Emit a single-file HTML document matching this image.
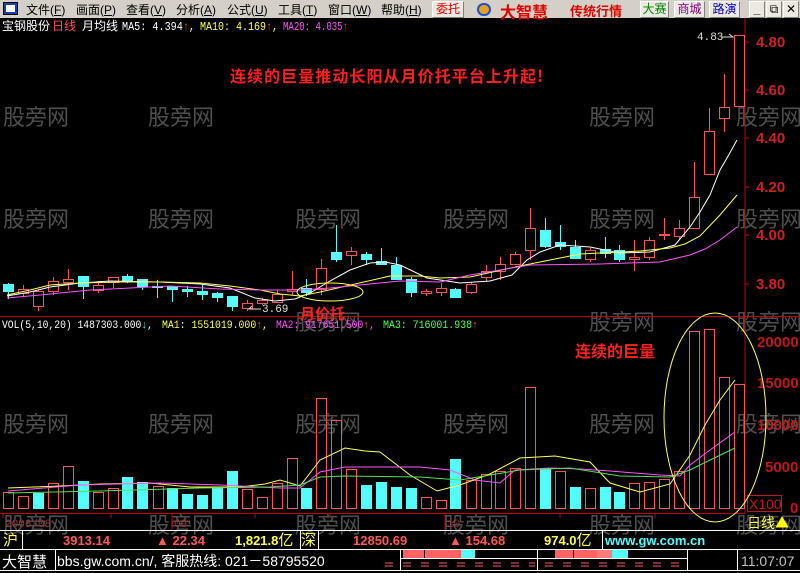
<!DOCTYPE html>
<html><head><meta charset="utf-8">
<style>
*{margin:0;padding:0;box-sizing:border-box}
body{width:800px;height:573px;background:#000;overflow:hidden;position:relative;font-family:"Liberation Sans","Noto Sans CJK SC",sans-serif}
.menu{position:absolute;left:0;top:0;width:800px;height:18px;background:#d4d0c8;font-size:12px;color:#000}
.menu span{position:absolute;top:1px;white-space:nowrap}
.btn{position:absolute;top:1px;height:17px;border:1px solid #fff;border-right-color:#808080;border-bottom-color:#808080;background:#ece9e0;font-size:12px;padding:0;line-height:15px;white-space:nowrap;text-align:center;overflow:hidden}
svg{position:absolute;left:0;top:0}
</style></head><body>
<div class="menu">
<div style="position:absolute;left:3px;top:2px;width:15px;height:13px;background:#1a3fa8;border:1px solid #000"><div style="position:absolute;left:2px;top:2px;width:9px;height:7px;background:#fff"></div></div>
<span style="left:26px">文件(<u>F</u>)</span>
<span style="left:76px">画面(<u>P</u>)</span>
<span style="left:126px">查看(<u>V</u>)</span>
<span style="left:176px">分析(<u>A</u>)</span>
<span style="left:227px">公式(<u>U</u>)</span>
<span style="left:278px">工具(<u>T</u>)</span>
<span style="left:328px">窗口(<u>W</u>)</span>
<span style="left:381px">帮助(<u>H</u>)</span>
<div class="btn" style="left:432px;width:32px;color:#e00000">委托</div>
<div style="position:absolute;left:477px;top:3px;width:14px;height:13px;border-radius:7px;background:#e8a020;border:2px solid #2050d0"></div>
<span style="left:500px;top:-1px;color:#e00000;font-weight:bold;font-size:16px;font-family:'Noto Sans CJK SC',sans-serif">大智慧</span>
<span style="left:570px;top:1px;color:#e00000;font-weight:bold;font-size:13px;font-family:'Noto Sans CJK SC',sans-serif">传统行情</span>
<div class="btn" style="left:640px;width:29px;color:#008000">大赛</div>
<div class="btn" style="left:674px;width:31px;color:#800080">商城</div>
<div class="btn" style="left:709px;width:31px;color:#0000c0">路演</div>
<div class="btn" style="left:749px;width:16px;font-weight:bold">_</div>
<div class="btn" style="left:766px;width:16px">⧉</div>
<div class="btn" style="left:783px;width:16px">✕</div>
</div>

<svg width="800" height="573" viewBox="0 0 800 573" font-family="Liberation Mono, Noto Sans CJK SC, monospace">
<g fill="#4e4e4e" font-size="22" font-family="Noto Sans CJK SC, sans-serif">
<text x="3" y="125">股旁网</text><text x="148" y="125">股旁网</text><text x="589" y="125">股旁网</text><text x="736" y="125">股旁网</text>
<text x="3" y="227">股旁网</text><text x="148" y="227">股旁网</text><text x="295" y="227">股旁网</text><text x="443" y="227">股旁网</text><text x="589" y="227">股旁网</text><text x="736" y="227">股旁网</text>
<text x="295" y="330">股旁网</text><text x="589" y="330">股旁网</text><text x="736" y="330">股旁网</text>
<text x="3" y="432">股旁网</text><text x="148" y="432">股旁网</text><text x="295" y="432">股旁网</text><text x="443" y="432">股旁网</text><text x="589" y="432">股旁网</text><text x="736" y="432">股旁网</text>
<text x="3" y="533">股旁网</text><text x="148" y="533">股旁网</text><text x="295" y="533">股旁网</text><text x="443" y="533">股旁网</text><text x="589" y="533">股旁网</text><text x="736" y="533">股旁网</text>
</g>
<g font-size="12">
<text x="2" y="30" fill="#fff" font-family="Noto Sans CJK SC, sans-serif">宝钢股份</text>
<text x="52" y="30" fill="#ff5050" font-family="Noto Sans CJK SC, sans-serif">日线</text>
<text x="82" y="30" fill="#fff" font-family="Noto Sans CJK SC, sans-serif">月均线</text>
<text x="122" y="30" fill="#fff" textLength="73" lengthAdjust="spacingAndGlyphs">MA5: 4.394<tspan fill="#ff5050">↑</tspan>,</text>
<text x="200" y="30" fill="#ffff54" textLength="78" lengthAdjust="spacingAndGlyphs">MA10: 4.169<tspan fill="#ff5050">↑</tspan>,</text>
<text x="283" y="30" fill="#ff54ff" textLength="65" lengthAdjust="spacingAndGlyphs">MA20: 4.035<tspan fill="#ff5050">↑</tspan></text>
</g>
<line x1="745" y1="18" x2="745" y2="513" stroke="#c00000"/>
<line x1="0" y1="316.5" x2="800" y2="316.5" stroke="#c00000"/>
<line x1="0" y1="513.5" x2="745" y2="513.5" stroke="#c00000"/>
<g fill="#d02020" font-weight="bold" font-size="15" font-family="Liberation Sans, sans-serif">
<text x="756" y="47">4.80</text><text x="756" y="95">4.60</text><text x="756" y="143">4.40</text><text x="756" y="192">4.20</text><text x="756" y="240">4.00</text><text x="756" y="289">3.80</text>
</g>
<g fill="#c01818" font-weight="bold" font-size="15" font-family="Liberation Sans, sans-serif">
<text x="757" y="347">20000</text><text x="757" y="388">15000</text><text x="757" y="430">10000</text><text x="765" y="472">5000</text><text x="790" y="513">0</text>
</g>
<rect x="747.5" y="495.5" width="34" height="16" fill="none" stroke="#c01818"/>
<text x="749" y="509" fill="#c01818" font-size="14" font-family="Liberation Sans, sans-serif">X100</text>
<g stroke="#c00000"><line x1="745" y1="42" x2="749" y2="42"/><line x1="745" y1="90" x2="749" y2="90"/><line x1="745" y1="138" x2="749" y2="138"/><line x1="745" y1="187" x2="749" y2="187"/><line x1="745" y1="235" x2="749" y2="235"/><line x1="745" y1="284" x2="749" y2="284"/>
<line x1="3" y1="513" x2="3" y2="518"/><line x1="111" y1="513" x2="111" y2="518"/><line x1="172" y1="513" x2="172" y2="530"/><line x1="445" y1="513" x2="445" y2="530"/><line x1="255" y1="513" x2="255" y2="518"/><line x1="330" y1="513" x2="330" y2="518"/><line x1="560" y1="513" x2="560" y2="518"/><line x1="655" y1="513" x2="655" y2="518"/></g>
<g fill="#a03030" font-size="11"><text x="5" y="527">2006/08</text><text x="174" y="527">09</text><text x="447" y="527">10</text></g>
<text x="747" y="528" fill="#ffff54" font-size="14" font-family="Noto Sans CJK SC, sans-serif">日线<tspan fill="#ffff00">▲</tspan></text>

<g stroke="#ff5454" stroke-width="1" fill="#000">
<path d="M23.5 285V296M38.5 290V311M53.5 277V295M68.5 269V290M98.5 281V293M113.5 277V288M247.5 300V311M262.5 298V305M277.5 290V303M292.5 271V295M321.5 259V295M351.5 247V265M426.5 289V296M441.5 283V296M471.5 282V294M486.5 265V281M500.5 257V280M515.5 252V265M530.5 208V260M590.5 248V262M634.5 240V271M649.5 237V260M664.5 218V240M679.5 220V240M694.5 162V228M709.5 108V174M724.5 74V132"/>
<rect x="18.5" y="289.5" width="10" height="4"/><rect x="33.5" y="291.5" width="10" height="15"/><rect x="48.5" y="281.5" width="10" height="10"/><rect x="63.5" y="279.5" width="10" height="3"/><rect x="93.5" y="285.5" width="10" height="5"/><rect x="108.5" y="277.5" width="10" height="5"/>
<rect x="242.5" y="303.5" width="10" height="5"/><rect x="257.5" y="300.5" width="10" height="3"/><rect x="272.5" y="294.5" width="10" height="8"/><rect x="287.5" y="289.5" width="10" height="2"/><rect x="316.5" y="268.5" width="10" height="21"/><rect x="346.5" y="251.5" width="10" height="4"/>
<rect x="421.5" y="291.5" width="10" height="2"/><rect x="436.5" y="288.5" width="10" height="4"/><rect x="466.5" y="284.5" width="10" height="8"/><rect x="481.5" y="271.5" width="10" height="6"/><rect x="495.5" y="264.5" width="10" height="7"/><rect x="510.5" y="254.5" width="10" height="10"/><rect x="525.5" y="228.5" width="10" height="22"/>
<rect x="585.5" y="250.5" width="10" height="9"/><rect x="629.5" y="257.5" width="10" height="2"/><rect x="644.5" y="240.5" width="10" height="17"/><rect x="659.5" y="234.5" width="10" height="1"/><rect x="674.5" y="228.5" width="10" height="8"/><rect x="689.5" y="197.5" width="10" height="31"/><rect x="704.5" y="131.5" width="10" height="43"/><rect x="719.5" y="107.5" width="10" height="11"/><rect x="734.5" y="35.5" width="10" height="71"/>
</g>
<g stroke="#54fcfc" fill="#54fcfc">
<path d="M8.5 283V299M83.5 276V299M127.5 274V283M142.5 279V290M157.5 280V298M172.5 286V302M187.5 286V297M202.5 285V300M217.5 292V302M232.5 296V311M306.5 279V296M336.5 225V262M366.5 252V265M381.5 248V265M396.5 257V280M411.5 277V297M455.5 288V298M545.5 218V248M560.5 225V250M575.5 240V258M605.5 237V258M619.5 245V262"/>
<rect x="3.5" y="284.5" width="10" height="7"/><rect x="78.5" y="276.5" width="10" height="10"/><rect x="122.5" y="276.5" width="10" height="4"/><rect x="137.5" y="279.5" width="10" height="7"/><rect x="152.5" y="286.5" width="10" height="1"/><rect x="167.5" y="286.5" width="10" height="3"/><rect x="182.5" y="289.5" width="10" height="2"/><rect x="197.5" y="291.5" width="10" height="3"/><rect x="212.5" y="293.5" width="10" height="4"/><rect x="227.5" y="296.5" width="10" height="10"/><rect x="301.5" y="288.5" width="10" height="4"/><rect x="331.5" y="252.5" width="10" height="7"/><rect x="361.5" y="254.5" width="10" height="5"/><rect x="376.5" y="261.5" width="10" height="3"/><rect x="391.5" y="265.5" width="10" height="14"/><rect x="406.5" y="279.5" width="10" height="13"/><rect x="450.5" y="289.5" width="10" height="8"/><rect x="540.5" y="230.5" width="10" height="16"/><rect x="555.5" y="242.5" width="10" height="4"/><rect x="570.5" y="247.5" width="10" height="11"/><rect x="600.5" y="249.5" width="10" height="4"/><rect x="614.5" y="250.5" width="10" height="9"/>
</g>
<text x="697" y="40" fill="#ddd" font-size="11">4.83</text><path d="M721 37H733L729 34" stroke="#ddd" fill="none"/>
<text x="262" y="312" fill="#ddd" font-size="11">3.69</text><path d="M261 309H249L252 306" stroke="#ddd" fill="none"/>
<polyline fill="none" stroke="#fff" points="7,296 30,292 50,287 80,283 110,281 160,282 200,284 230,288 255,298 275,301 295,299 310,293 330,281 350,270 370,263 385,262 400,265 427,278 460,283 490,281 512,275 527,260 540,252 560,245 590,247 620,253 650,252 675,245 690,227 700,212 710,195 720,170 727,158 737,140"/>
<polyline fill="none" stroke="#ffff54" points="7,295 30,290 50,285 80,283 120,282 160,282 200,283 230,286 260,290 280,294 300,296 320,292 355,284 390,276 420,276 440,278 470,277 520,266 580,254 640,251 670,248 685,244 700,236 720,215 737,195"/>
<polyline fill="none" stroke="#ff54ff" points="7,298 40,295 90,290 130,288 170,286 220,289 260,290 300,290 330,288 360,285 400,281 440,282 470,275 530,265 600,264 660,262 690,255 705,249 720,240 737,227"/>
<ellipse cx="330" cy="292" rx="33" ry="9" fill="none" stroke="#ffff54"/>
<text x="300" y="319" fill="#ff2020" font-weight="bold" font-size="15" font-family="Noto Sans CJK SC, sans-serif">月价托</text>
<text x="230" y="82" fill="#ff2020" font-weight="bold" font-size="16" textLength="313" lengthAdjust="spacing" font-family="Noto Sans CJK SC, sans-serif">连续的巨量推动长阳从月价托平台上升起!</text>
<text x="575" y="357" fill="#ff2020" font-weight="bold" font-size="16" font-family="Noto Sans CJK SC, sans-serif">连续的巨量</text>
<g font-size="11">
<text x="2" y="328" fill="#fff" textLength="151" lengthAdjust="spacingAndGlyphs">VOL(5,10,20) 1487303.000<tspan fill="#54fcfc">↓</tspan>,</text>
<text x="162" y="328" fill="#ffff54" textLength="106" lengthAdjust="spacingAndGlyphs">MA1: 1551019.000<tspan fill="#ff5050">↑</tspan>,</text>
<text x="276" y="328" fill="#ff54ff" textLength="99" lengthAdjust="spacingAndGlyphs">MA2: 917651.500<tspan fill="#ff5050">↑</tspan>,</text>
<text x="383" y="328" fill="#54ff54" textLength="95" lengthAdjust="spacingAndGlyphs">MA3: 716001.938<tspan fill="#ff5050">↑</tspan></text>
</g>
<g stroke="#ff5454" fill="none">
<rect x="3.5" y="492.5" width="10" height="16"/><rect x="18.5" y="496.5" width="10" height="12"/><rect x="48.5" y="483.5" width="10" height="25"/><rect x="63.5" y="466.5" width="10" height="42"/><rect x="93.5" y="492.5" width="10" height="16"/><rect x="108.5" y="488.5" width="10" height="20"/><rect x="153.5" y="486.5" width="10" height="22"/>
<rect x="242.5" y="489.5" width="10" height="19"/><rect x="257.5" y="497.5" width="10" height="11"/><rect x="272.5" y="483.5" width="10" height="25"/><rect x="287.5" y="458.5" width="10" height="50"/><rect x="316.5" y="398.5" width="10" height="110"/><rect x="331.5" y="420.5" width="10" height="88"/><rect x="346.5" y="469.5" width="10" height="39"/>
<rect x="421.5" y="497.5" width="10" height="11"/><rect x="436.5" y="500.5" width="10" height="8"/><rect x="466.5" y="480.5" width="10" height="28"/><rect x="481.5" y="474.5" width="10" height="34"/><rect x="495.5" y="471.5" width="10" height="37"/><rect x="510.5" y="468.5" width="10" height="40"/><rect x="525.5" y="387.5" width="10" height="121"/><rect x="555.5" y="471.5" width="10" height="37"/><rect x="585.5" y="488.5" width="10" height="20"/>
<rect x="629.5" y="483.5" width="10" height="25"/><rect x="644.5" y="482.5" width="10" height="26"/><rect x="659.5" y="479.5" width="10" height="29"/><rect x="674.5" y="471.5" width="10" height="37"/><rect x="689.5" y="331.5" width="10" height="177"/><rect x="704.5" y="329.5" width="10" height="179"/><rect x="719.5" y="377.5" width="10" height="131"/><rect x="734.5" y="384.5" width="10" height="124"/>
</g>
<g fill="#54fcfc">
<rect x="33" y="493" width="11" height="16"/><rect x="78" y="481" width="11" height="28"/><rect x="122" y="477" width="11" height="32"/><rect x="137" y="482" width="11" height="27"/><rect x="167" y="488" width="11" height="21"/><rect x="182" y="494" width="11" height="15"/><rect x="197" y="495" width="11" height="14"/><rect x="212" y="487" width="11" height="22"/><rect x="227" y="471" width="11" height="38"/><rect x="301" y="488" width="11" height="21"/><rect x="361" y="485" width="11" height="24"/><rect x="376" y="482" width="11" height="27"/><rect x="391" y="487" width="11" height="22"/><rect x="406" y="488" width="11" height="21"/><rect x="450" y="459" width="11" height="50"/><rect x="540" y="469" width="11" height="40"/><rect x="570" y="487" width="11" height="22"/><rect x="600" y="487" width="11" height="22"/><rect x="614" y="492" width="11" height="17"/>
</g>
<polyline fill="none" stroke="#ffff54" points="8,488 60,486 100,484 150,483 190,487 240,487 265,484 280,480 300,486 320,460 345,448 365,451 380,452 410,475 437,491 460,485 490,474 520,458 555,456 590,462 610,483 640,492 670,484 690,455 705,425 720,400 735,380"/>
<polyline fill="none" stroke="#ff54ff" points="8,491 80,485 160,483 220,485 280,488 300,488 320,472 345,467 420,467 450,470 475,480 500,483 515,470 550,468 580,469 610,471 660,475 680,476 690,465 710,450 735,432"/>
<polyline fill="none" stroke="#54e054" points="8,493 100,491 200,488 270,487 300,485 320,477 345,476 420,477 460,480 520,470 570,468 620,476 670,477 690,470 710,460 735,448"/>
<ellipse cx="715" cy="417.5" rx="51" ry="104.5" fill="none" stroke="#ffff54"/>

<g stroke="#fff" fill="none">
<line x1="0" y1="530.5" x2="800" y2="530.5"/><line x1="0" y1="549.5" x2="800" y2="549.5"/><line x1="0" y1="570.5" x2="800" y2="570.5"/>
<line x1="22.5" y1="530" x2="22.5" y2="549"/><line x1="300.5" y1="530" x2="300.5" y2="549"/><line x1="318.5" y1="530" x2="318.5" y2="549"/><line x1="602.5" y1="530" x2="602.5" y2="549"/>
<line x1="55.5" y1="549" x2="55.5" y2="571"/><line x1="737.5" y1="549" x2="737.5" y2="571"/>
</g>
<g font-family="Liberation Sans, Noto Sans CJK SC, sans-serif" font-size="13" font-weight="bold">
<text x="3" y="545" fill="#ffff54" font-weight="normal" font-size="15" font-family="Noto Sans CJK SC, sans-serif">沪</text>
<text x="63" y="545" fill="#ff5a5a">3913.14</text>
<text x="156" y="545" fill="#ff5a5a">▲ 22.34</text>
<text x="235" y="545" fill="#ffff54">1,821.8<tspan font-weight="normal" font-size="15" font-family="Noto Sans CJK SC, sans-serif">亿</tspan></text>
<text x="301" y="545" fill="#ffff54" font-weight="normal" font-size="15" font-family="Noto Sans CJK SC, sans-serif">深</text>
<text x="353" y="545" fill="#ff5a5a">12850.69</text>
<text x="449" y="545" fill="#ff5a5a">▲ 154.68</text>
<text x="544" y="545" fill="#ffff54">974.0<tspan font-weight="normal" font-size="15" font-family="Noto Sans CJK SC, sans-serif">亿</tspan></text>
<text x="605" y="545" fill="#54fcfc">www.gw.com.cn</text>
<text x="2" y="567" fill="#fff" font-weight="normal" font-size="15" font-family="Noto Sans CJK SC, sans-serif">大智慧</text>
<text x="57" y="566" fill="#fff" font-weight="normal" font-size="14">bbs.gw.com.cn/, 客服热线: 021－58795520</text>
<text x="741" y="566" fill="#c0c0c0" font-weight="normal" font-size="14">11:07:07</text>
</g>
<g>
<rect x="403" y="550" width="21" height="8" fill="#ff6464"/><rect x="425" y="550" width="36" height="8" fill="#ff6464"/><rect x="461" y="550" width="14" height="8" fill="#54fcfc"/>
<rect x="555" y="550" width="18" height="8" fill="#ff6464"/><rect x="574" y="550" width="23" height="8" fill="#ff6464"/><rect x="597" y="550" width="15" height="8" fill="#ff7a7a"/><rect x="612" y="550" width="16" height="8" fill="#54fcfc"/>
<g stroke="#fff" fill="none"><rect x="400.5" y="549.5" width="137" height="9"/><rect x="537.5" y="549.5" width="150" height="9"/><line x1="400.5" y1="558" x2="400.5" y2="571"/><line x1="537.5" y1="558" x2="537.5" y2="571"/><line x1="687.5" y1="558" x2="687.5" y2="571"/></g>
<path d="M385 563h8M403 563h8M421 563h8M439 563h8M457 563h8M475 563h8M493 563h8M511 563h8M529 563h6M545 563h8M563 563h8M581 563h8M599 563h8M617 563h8M635 563h8M653 563h8M671 563h8M385 566h8M403 566h8M421 566h8M439 566h8M457 566h8M475 566h8M493 566h8M511 566h8M529 566h6M545 566h8M563 566h8M581 566h8M599 566h8M617 566h8M635 566h8M653 566h8M671 566h8" stroke="#ff5a5a"/>
</g>
</svg>
</body></html>
